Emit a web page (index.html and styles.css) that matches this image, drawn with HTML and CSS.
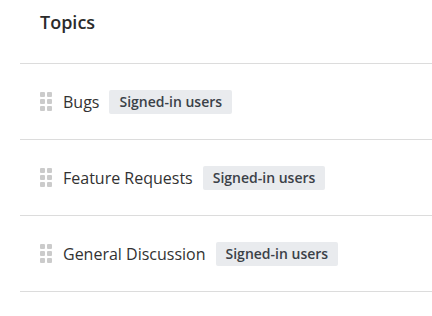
FILE: index.html
```html
<!DOCTYPE html>
<html lang="en">
<head>
  <meta charset="UTF-8" />
  <title>Topics</title>
  <link rel="stylesheet" href="styles.css">
</head>
<body>
  <section class="topics">
    <h2 class="topics-title">Topics</h2>
    <ul class="topic-list">
      <li class="topic">
        <span class="handle"><i></i><i></i><i></i><i></i><i></i><i></i></span>
        <span class="topic-name">Bugs</span>
        <span class="badge">Signed-in users</span>
      </li>
      <li class="topic">
        <span class="handle"><i></i><i></i><i></i><i></i><i></i><i></i></span>
        <span class="topic-name">Feature Requests</span>
        <span class="badge">Signed-in users</span>
      </li>
      <li class="topic">
        <span class="handle"><i></i><i></i><i></i><i></i><i></i><i></i></span>
        <span class="topic-name">General Discussion</span>
        <span class="badge">Signed-in users</span>
      </li>
    </ul>
  </section>
</body>
</html>
```

FILE: styles.css
```css
* {
  margin: 0;
  padding: 0;
  box-sizing: border-box;
}

body {
  font-family: 'Open Sans', 'Noto Sans', sans-serif;
  background: #fff;
  color: #323232;
}

.topics {
  padding-left: 20px;
}

.topics-title {
  height: 64px;
  padding: 10px 20px 0;
  font-size: 18px;
  font-weight: 600;
  color: #2b2b2b;
  border-bottom: 1px solid #dcdcdc;
}

.topic-list {
  list-style: none;
}

.topic {
  height: 76px;
  display: flex;
  align-items: center;
  padding-left: 20px;
  border-bottom: 1px solid #dcdcdc;
}

.handle {
  display: grid;
  grid-template-columns: 5px 5px;
  grid-auto-rows: 5px;
  gap: 2px;
  margin-right: 11px;
}

.handle i {
  display: block;
  background: #cbcbcb;
  border-radius: 1px;
}

.topic-name {
  font-size: 16px;
  margin-right: 10px;
}

.badge {
  background: #e9ebee;
  color: #3b4148;
  font-size: 14px;
  font-weight: 600;
  line-height: 18px;
  padding: 3px 10px;
  border-radius: 2px;
}
```
